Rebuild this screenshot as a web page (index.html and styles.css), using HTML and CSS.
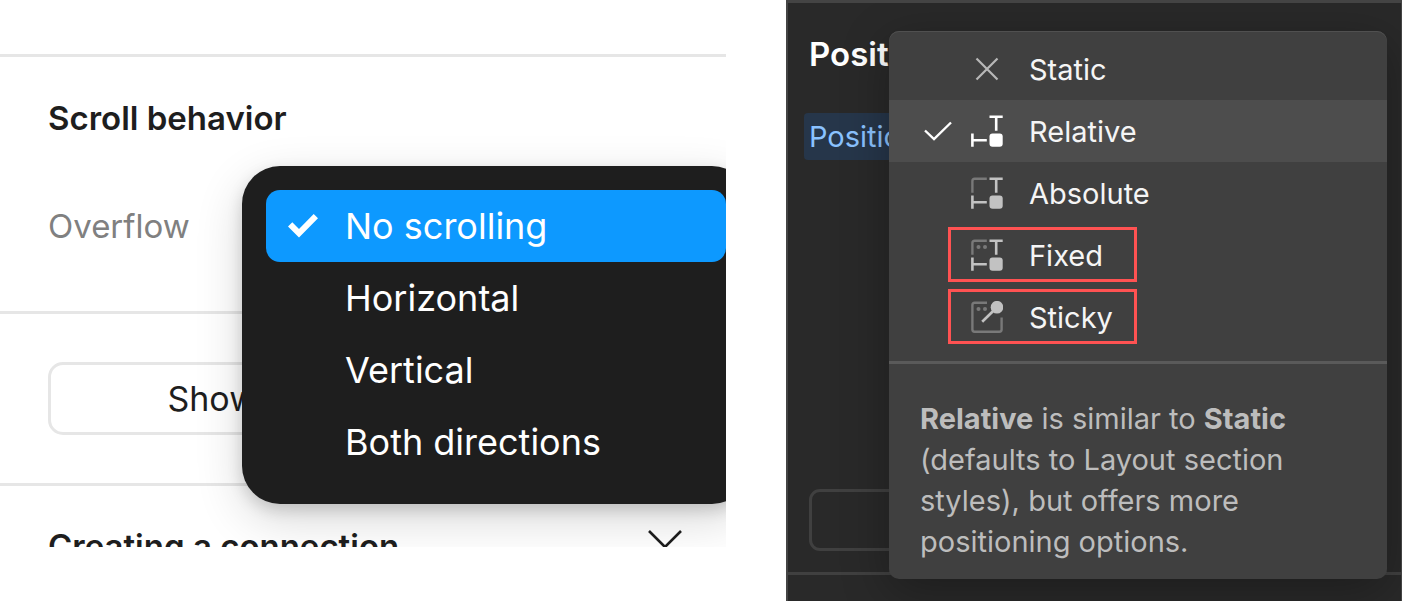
FILE: index.html
```
<!DOCTYPE html>
<html lang="en">
<head>
  <meta charset="UTF-8">
  <title>Scroll and position settings</title>
  <meta name="viewport" content="width=device-width, initial-scale=1.0">
  <link rel="stylesheet" href="styles.css">
</head>
<body>
  <section class="panel light-panel">
    <div class="strip"></div>
    <div class="scroll-section">
      <h2>Scroll behavior</h2>
      <div class="overflow-row">Overflow</div>
    </div>
    <div class="button-section">
      <button class="show-btn">Show prototype settings</button>
    </div>
    <div class="connection-section">
      <h2>Creating a connection</h2>
      <svg class="chevron" width="34" height="32" viewBox="0 0 34 32"><path d="M1 1l16 16L33 1" fill="none" stroke="#1e1e1e" stroke-width="2.6"/></svg>
    </div>

    <div class="overflow-menu" role="menu">
      <button class="overflow-item selected" role="menuitem">
        <svg class="tick" width="30" height="24" viewBox="0 0 30 24"><path d="M0 12.6L4.3 8.3 11 15 25.7 0 30 4.3 11 23.4z" fill="#fff"/></svg>
        No scrolling
      </button>
      <button class="overflow-item" role="menuitem"><span class="tick"></span>Horizontal</button>
      <button class="overflow-item" role="menuitem"><span class="tick"></span>Vertical</button>
      <button class="overflow-item" role="menuitem"><span class="tick"></span>Both directions</button>
    </div>
  </section>

  <section class="panel dark-panel">
    <div class="position-section">
      <h2>Position</h2>
      <span class="position-label">Position</span>
      <div class="empty-box"></div>
    </div>
    <div class="dark-footer"></div>

    <div class="position-menu">
      <div class="position-list" role="menu">
        <button class="position-item" role="menuitem">
          <span class="check"></span>
          <svg class="icon" viewBox="0 0 32 32"><path d="M5.5 5.5l21 21M26.5 5.5l-21 21" stroke="#b8b8b8" stroke-width="2.2"/></svg>
          Static
        </button>
        <button class="position-item active" role="menuitem">
          <svg class="check" viewBox="0 0 28 20"><path d="M1 9.5l9 8.5L27 1.5" fill="none" stroke="#fff" stroke-width="2.4"/></svg>
          <svg class="icon" viewBox="0 0 32 32">
            <path d="M18.5 1.8h13.2M25.2 1.8v14M1.4 18.5v13.2M1.4 25.2h14.4" fill="none" stroke="#fff" stroke-width="2.6"/>
            <rect x="18.5" y="18.5" width="13.2" height="13.2" rx="3" fill="#fff"/>
          </svg>
          Relative
        </button>
        <button class="position-item" role="menuitem">
          <span class="check"></span>
          <svg class="icon" viewBox="0 0 32 32">
            <path d="M1.4 15.8V4q0-2.2 2.2-2.2h12.2" fill="none" stroke="#797979" stroke-width="2.4"/>
            <path d="M18.5 1.8h13.2M25.2 1.8v14M1.4 18.5v13.2M1.4 25.2h14.4" fill="none" stroke="#c2c2c2" stroke-width="2.6"/>
            <rect x="18.5" y="18.5" width="13.2" height="13.2" rx="3" fill="#c2c2c2"/>
          </svg>
          Absolute
        </button>
        <button class="position-item marked" role="menuitem">
          <span class="check"></span>
          <svg class="icon" viewBox="0 0 32 32">
            <path d="M1.4 15.8V4q0-2.2 2.2-2.2h12.2" fill="none" stroke="#797979" stroke-width="2.4"/>
            <circle cx="7.5" cy="8" r="2" fill="#797979"/>
            <circle cx="14" cy="8" r="2" fill="#797979"/>
            <path d="M18.5 1.8h13.2M25.2 1.8v14M1.4 18.5v13.2M1.4 25.2h14.4" fill="none" stroke="#c2c2c2" stroke-width="2.6"/>
            <rect x="18.5" y="18.5" width="13.2" height="13.2" rx="3" fill="#c2c2c2"/>
          </svg>
          Fixed
        </button>
        <button class="position-item marked" role="menuitem">
          <span class="check"></span>
          <svg class="icon" viewBox="0 0 32 32">
            <path d="M16 1.8H3.6q-2.2 0-2.2 2.2v24.6q0 2.2 2.2 2.2h24.8q2.2 0 2.2-2.2V16.5" fill="none" stroke="#797979" stroke-width="2.4"/>
            <circle cx="7.5" cy="8" r="2" fill="#797979"/>
            <circle cx="14" cy="8" r="2" fill="#797979"/>
            <path d="M11.2 20.8L26 6.2" stroke="#c2c2c2" stroke-width="2.6"/>
            <circle cx="26" cy="6.2" r="6.3" fill="#c2c2c2"/>
          </svg>
          Sticky
        </button>
      </div>
      <p class="help-text"><b>Relative</b> is similar to <b>Static</b> (defaults to Layout section styles), but offers more positioning options.</p>
    </div>
  </section>
</body>
</html>
```
FILE: styles.css
```
*, *::after {
  box-sizing: border-box;
  margin: 0;
  padding: 0;
}

body {
  display: grid;
  grid-template-columns: 726fr 616fr;
  align-items: start;
  gap: 60px;
  background-color: #fff;
  font-family: Inter, "Liberation Sans", sans-serif;
}

button {
  border: none;
  background: none;
  font-family: inherit;
  cursor: pointer;
}

h2 {
  font-size: 33px;
  line-height: 40px;
  font-weight: 600;
}

.panel {
  position: relative;
  overflow: hidden;
}

/* scroll behavior panel */
.light-panel {
  height: 91vh;
  color: #1e1e1e;
}

.strip {
  height: 57px;
  border-bottom: 3px solid #e6e6e6;
}

.scroll-section {
  padding: 41px 48px 49px;
  border-bottom: 3px solid #e6e6e6;
}

.overflow-row {
  margin-top: 52px;
  font-size: 33px;
  line-height: 72px;
  color: #808080;
}

.button-section {
  padding: 48px;
  border-bottom: 3px solid #e6e6e6;
}

.show-btn {
  width: 100%;
  height: 73px;
  border: 3px solid #e6e6e6;
  border-radius: 15px;
  font-size: 34px;
  color: #1e1e1e;
}

.connection-section {
  display: flex;
  justify-content: space-between;
  align-items: center;
  padding: 40px 44px 40px 48px;
}

.overflow-menu {
  position: absolute;
  top: 166px;
  left: 242px;
  right: -24px;
  display: flex;
  flex-direction: column;
  padding: 24px 24px 26px;
  border-radius: 38px;
  background-color: #1e1e1e;
  box-shadow: 0 6px 15px rgba(0, 0, 0, 0.15), 0 15px 48px rgba(0, 0, 0, 0.16);
}

.overflow-item {
  display: flex;
  align-items: center;
  gap: 27px;
  height: 72px;
  padding: 0 22px;
  border-radius: 14px;
  font-size: 36px;
  color: #fff;
}

.overflow-item.selected {
  background-color: #0d99ff;
}

.tick {
  width: 30px;
}

/* position panel */
.dark-panel {
  display: flex;
  flex-direction: column;
  height: 100vh;
  border: 2px solid #444;
  border-width: 3px 1px 0 2px;
  background-color: #292929;
  color: #fff;
}

.position-section {
  display: flex;
  flex: 1;
  flex-direction: column;
  align-items: flex-start;
  padding: 31px 21px 21px;
  border-bottom: 3px solid #404040;
}

.position-label {
  margin: 39px 0 0 -5px;
  padding: 0 5px;
  border-radius: 4px;
  background-color: #26364a;
  font-size: 29px;
  line-height: 47px;
  color: #8ac2ff;
}

.empty-box {
  width: 100%;
  height: 62px;
  margin-top: auto;
  border: 3px solid #404040;
  border-radius: 11px;
}

.dark-footer {
  height: 26px;
}

.position-menu {
  position: absolute;
  top: 28px;
  left: 101px;
  right: 14px;
  border-radius: 10px;
  background-color: #404040;
  box-shadow: inset 0 1px #505050, 0 12px 48px rgba(0, 0, 0, 0.3);
}

.position-list {
  padding: 7px 0 13px;
  border-bottom: 3px solid #5a5a5a;
}

.position-item {
  position: relative;
  display: flex;
  align-items: center;
  width: 100%;
  height: 62px;
  padding-left: 35px;
  font-size: 29px;
  color: #f5f5f5;
}

.position-item.active {
  background-color: #4d4d4d;
}

.position-item.marked::after {
  content: "";
  position: absolute;
  top: 3px;
  left: 59px;
  width: 189px;
  height: 55px;
  border: 3px solid #ff5252;
}

.check {
  width: 28px;
  height: 20px;
  margin-right: 19px;
}

.icon {
  width: 32px;
  height: 32px;
  margin-right: 26px;
}

.help-text {
  padding: 34px 80px 17px 31px;
  font-size: 29px;
  line-height: 41px;
  color: #bdbdbd;
}
```
